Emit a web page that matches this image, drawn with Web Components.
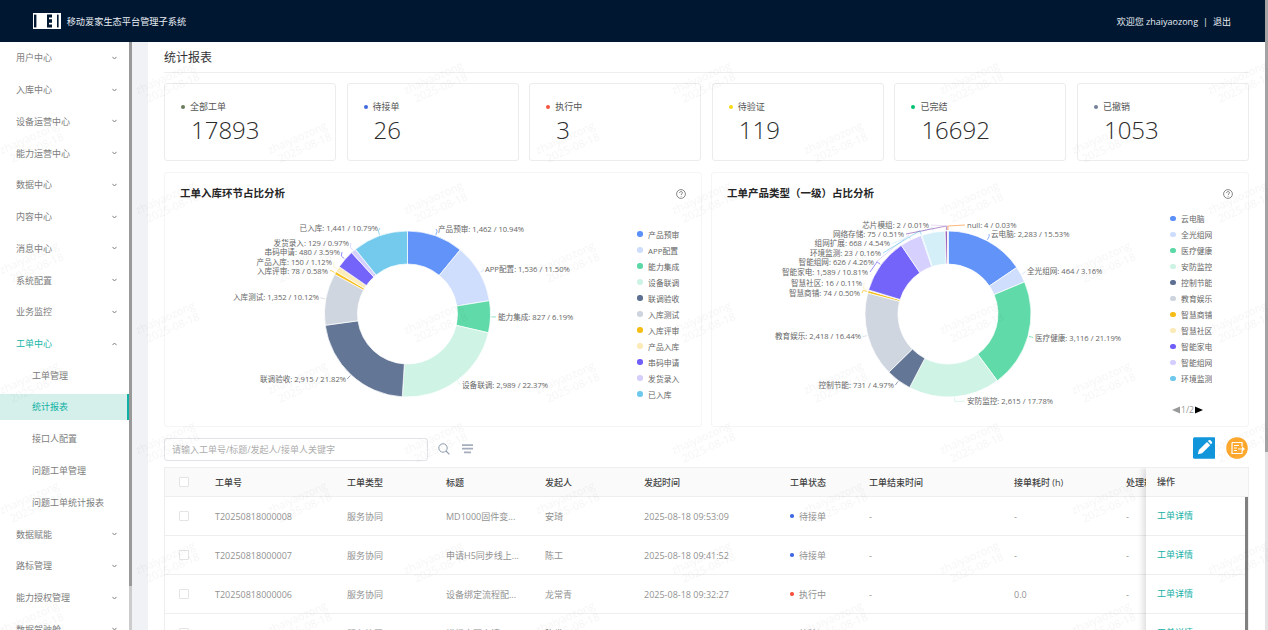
<!DOCTYPE html>
<html lang="zh">
<head>
<meta charset="utf-8">
<title>统计报表</title>
<style>
html,body{margin:0;height:630px;overflow:hidden;background:#fff;}
body{font-family:"Open Sans","Noto Sans CJK SC",sans-serif;font-size:9px;color:#666;}
</style>
</head>
<body>
<app-shell>
  <top-bar slot="top" title="移动爱家生态平台管理子系统" user="zhaiyaozong"></top-bar>
  <side-nav slot="side">
    <side-item label="用户中心"></side-item>
    <side-item label="入库中心"></side-item>
    <side-item label="设备运营中心"></side-item>
    <side-item label="能力运营中心"></side-item>
    <side-item label="数据中心"></side-item>
    <side-item label="内容中心"></side-item>
    <side-item label="消息中心"></side-item>
    <side-item label="系统配置"></side-item>
    <side-item label="业务监控"></side-item>
    <side-item label="工单中心" open></side-item>
    <side-item label="工单管理" sub></side-item>
    <side-item label="统计报表" sub active></side-item>
    <side-item label="接口人配置" sub></side-item>
    <side-item label="问题工单管理" sub></side-item>
    <side-item label="问题工单统计报表" sub></side-item>
    <side-item label="数据赋能"></side-item>
    <side-item label="路标管理"></side-item>
    <side-item label="能力授权管理"></side-item>
    <side-item label="数据驾驶舱"></side-item>
  </side-nav>
  <report-page slot="main">
    <stat-card label="全部工单" value="17893" dot="#6b7b5e"></stat-card>
    <stat-card label="待接单" value="26" dot="#4169e1"></stat-card>
    <stat-card label="执行中" value="3" dot="#f5533d"></stat-card>
    <stat-card label="待验证" value="119" dot="#fadb14"></stat-card>
    <stat-card label="已完结" value="16692" dot="#00c16e"></stat-card>
    <stat-card label="已撤销" value="1053" dot="#738099"></stat-card>
    <donut-card slot="charts" chart="stage" heading="工单入库环节占比分析"></donut-card>
    <donut-card slot="charts" chart="product" heading="工单产品类型（一级）占比分析"></donut-card>
    <order-toolbar slot="tools"></order-toolbar>
    <order-table slot="table"></order-table>
  </report-page>
  <water-mark slot="mark"></water-mark>
</app-shell>

<script>
const COLORS=["#5B8FF9","#CDDDFD","#5AD8A6","#CDF3E4","#5D7092","#CED4DE","#F6BD16","#FCEBB9","#6F5EF9","#D3CEFD","#6DC8EC","#D3EEF9","#945FB9","#DECFEA","#FF9845"];

// label: [name, value, text shown after the name, label x, label y, side]
const CHARTS={
  stage:{left:164,width:470,cx:407.5,cy:314,legendTop:17,legendWidth:60,items:[
    ["产品预审",1462,"1,462 / 10.94%",438,229,"r"],
    ["APP配置",1536,"1,536 / 11.50%",485,269,"r"],
    ["能力集成",827,"827 / 6.19%",498,317,"r"],
    ["设备联调",2989,"2,989 / 22.37%",462,385,"r"],
    ["联调验收",2915,"2,915 / 21.82%",346,379,"l"],
    ["入库测试",1352,"1,352 / 10.12%",319,297,"l"],
    ["入库评审",78,"78 / 0.58%",328,271,"l"],
    ["产品入库",150,"150 / 1.12%",332,262,"l"],
    ["串码申请",480,"480 / 3.59%",340,252,"l"],
    ["发货录入",129,"129 / 0.97%",349,243,"l"],
    ["已入库",1441,"1,441 / 10.79%",378,228,"l"]
  ]},
  product:{left:711,width:456,cx:948,cy:314,legendTop:1.7,legendWidth:31,legendCount:11,pager:true,items:[
    ["云电脑",2283,"2,283 / 15.53%",991,234,"r"],
    ["全光组网",464,"464 / 3.16%",1027,271,"r"],
    ["医疗健康",3116,"3,116 / 21.19%",1035,338,"r"],
    ["安防监控",2615,"2,615 / 17.78%",967,401,"r"],
    ["控制节能",731,"731 / 4.97%",894,385,"l"],
    ["教育娱乐",2418,"2,418 / 16.44%",861,336,"l"],
    ["智慧商铺",74,"74 / 0.50%",860,293,"l"],
    ["智慧社区",16,"16 / 0.11%",862,283,"l"],
    ["智能家电",1589,"1,589 / 10.81%",868,272,"l"],
    ["智能组网",626,"626 / 4.26%",874,262,"l"],
    ["环境监测",23,"23 / 0.16%",881,253,"l"],
    ["组网扩展",668,"668 / 4.54%",890,243.5,"l"],
    ["网络存储",75,"75 / 0.51%",904,234,"l"],
    ["芯片模组",2,"2 / 0.01%",929,225,"l"],
    ["null",4,"4 / 0.03%",967,225,"r"]
  ]}
};

const ORDERS=[
  ["T20250818000008","服务协同","MD1000固件变...","安琦","2025-08-18 09:53:09","待接单","#4169e1","-","-","-"],
  ["T20250818000007","服务协同","申请H5同步线上...","陈工","2025-08-18 09:41:52","待接单","#4169e1","-","-","-"],
  ["T20250818000006","服务协同","设备绑定流程配...","龙常青","2025-08-18 09:32:27","执行中","#f5533d","-","0.0","-"],
  ["T20250818000005","服务协同","模板变更申请...","陈发","2025-08-18 09:20:11","待验证","#fadb14","-","0.0","-"]
];

class AppShell extends HTMLElement{
  constructor(){
    super();
    this.attachShadow({mode:"open"}).innerHTML=`<style>
      :host{display:grid;grid-template-columns:132px 16px 1fr 3px;grid-template-rows:42px 588px;width:1268px;height:630px;position:relative;overflow:hidden;}
      .top{grid-column:1 / 4;position:relative;z-index:3;}
      .side{grid-row:2;}
      .gap{grid-row:2;background:#f0f2f5;}
      .main{grid-row:2;min-width:0;overflow:hidden;}
      .bar{grid-column:4;grid-row:1 / 3;background:linear-gradient(#a3a3a3 452px,#e4e4e4 452px);}
    </style>
    <div class="top"><slot name="top"></slot></div>
    <div class="side"><slot name="side"></slot></div>
    <div class="gap"></div>
    <div class="main"><slot name="main"></slot></div>
    <div class="bar"></div>
    <slot name="mark"></slot>`;
  }
}

class TopBar extends HTMLElement{
  connectedCallback(){
    this.attachShadow({mode:"open"}).innerHTML=`<style>
      :host{display:flex;align-items:center;height:42px;background:#001731;color:#e8edf3;font-size:9.2px;padding:0 33px;box-sizing:border-box;}
      svg{display:block;margin-right:5.7px;}
      .user{margin-left:auto;padding-right:1px;display:flex;gap:5px;font-size:9px;}
    </style>
    <svg width="28" height="16" viewBox="0 0 28 16">
      <rect width="28" height="16" fill="#fff"/>
      <rect x="1" y="1.6" width="2.4" height="12.8" fill="#001731"/>
      <path d="M14 1.6h5v3h-3v1.6h3v3.6h-3v1.6h3v3h-5z" fill="#001731"/>
      <rect x="24" y="1.6" width="1.6" height="12.8" fill="#001731"/>
    </svg>
    <span>${this.getAttribute("title")}</span>
    <div class="user"><span>欢迎您 ${this.getAttribute("user")}</span><span>|</span><span>退出</span></div>`;
    this.removeAttribute("title");
  }
}

class SideNav extends HTMLElement{
  constructor(){
    super();
    this.attachShadow({mode:"open"}).innerHTML=`<style>
      :host{display:flex;height:588px;width:132px;overflow:hidden;}
      .list{width:129px;background:#fff;flex:none;}
      .bar{width:3px;flex:none;background:linear-gradient(#999 544px,#ccc 544px);}
    </style>
    <div class="list"><slot></slot></div><div class="bar"></div>`;
  }
}

class SideItem extends HTMLElement{
  connectedCallback(){
    const sub=this.hasAttribute("sub"),open=this.hasAttribute("open");
    this.attachShadow({mode:"open"}).innerHTML=`<style>
      :host{display:flex;align-items:center;height:31.75px;box-sizing:border-box;padding-left:16px;color:#7d7d7d;font-size:9px;}
      :host([sub]){padding-left:32px;}
      :host([open]){color:#16b5a8;}
      :host([active]){height:26px;margin:2.6px 0 3.1px;background:#d5f0eb;color:#10b0a4;border-right:2px solid #10b0a4;}
      svg{margin-left:auto;margin-right:12px;}
    </style>
    <span>${this.getAttribute("label")}</span>
    ${sub?"":`<svg width="5" height="4" viewBox="0 0 5 4"><path d="${open?"M.4 3.2L2.5 1l2.1 2.2":"M.4 .8l2.1 2.2L4.6 .8"}" fill="none" stroke="#7f7f7f" stroke-width="1"/></svg>`}`;
  }
}

class ReportPage extends HTMLElement{
  constructor(){
    super();
    this.attachShadow({mode:"open"}).innerHTML=`<style>
      :host{display:block;height:588px;background:#fff;padding:0 16px;box-sizing:border-box;overflow:hidden;}
      h1{margin:0;height:31px;box-sizing:border-box;line-height:31px;font-size:12px;font-weight:400;color:#333;border-bottom:1px solid #eee;}
      .stats{display:grid;grid-template-columns:repeat(6,172px);justify-content:space-between;margin-top:10px;}
      .charts{display:grid;grid-template-columns:538px 538px;justify-content:space-between;margin-top:11px;}
      .tools{margin-top:11px;}
      .table{margin-top:6px;}
    </style>
    <h1>统计报表</h1>
    <div class="stats"><slot></slot></div>
    <div class="charts"><slot name="charts"></slot></div>
    <div class="tools"><slot name="tools"></slot></div>
    <div class="table"><slot name="table"></slot></div>`;
  }
}

class StatCard extends HTMLElement{
  connectedCallback(){
    this.attachShadow({mode:"open"}).innerHTML=`<style>
      :host{display:block;height:78px;box-sizing:border-box;border:1px solid #ececec;border-radius:3px;padding:16px 0 0 16px;}
      .label{display:flex;align-items:center;height:13px;font-size:9px;color:#555;}
      i{width:4px;height:4px;border-radius:50%;background:var(--dot);margin-right:5px;}
      .value{font-size:24px;font-weight:300;line-height:30px;color:#2b2b2b;margin:2px 0 0 10px;}
    </style>
    <div class="label" style="--dot:${this.getAttribute("dot")}"><i></i>${this.getAttribute("label")}</div>
    <div class="value">${this.getAttribute("value")}</div>`;
  }
}

class DonutCard extends HTMLElement{
  connectedCallback(){
    const cfg=CHARTS[this.getAttribute("chart")];
    const total=cfg.items.reduce((s,d)=>s+d[1],0);
    const R=83,r=50,x0=cfg.left+1,y0=172+37,w=cfg.width,h=217;
    const pt=(rad,a)=>[cfg.cx+rad*Math.sin(a),cfg.cy-rad*Math.cos(a)];
    let a=0,arcs="",labels="";
    cfg.items.forEach((d,i)=>{
      const b=a+d[1]/total*Math.PI*2,c=COLORS[i%COLORS.length],big=b-a>Math.PI?1:0;
      const [p,q,s,t]=[pt(R,a),pt(R,b),pt(r,b),pt(r,a)];
      arcs+=`<path d="M${p}A${R} ${R} 0 ${big} 1 ${q}L${s}A${r} ${r} 0 ${big} 0 ${t}Z" fill="${c}" fill-opacity=".96" stroke="#fff" stroke-width=".7"/>`;
      const m=(a+b)/2,right=d[5]==="r",[k,l]=[pt(R+1,m),pt(R+5,m)];
      const ex=d[3]+(right?-2:2);
      labels+=`<polyline points="${k} ${l} ${ex},${d[4]}" fill="none" stroke="${c}" stroke-width=".7"/>`;
      labels+=`<text x="${d[3]}" y="${d[4]}" dy=".35em" text-anchor="${right?"start":"end"}">${d[0]}: ${d[2]}</text>`;
      a=b;
    });
    const shown=cfg.items.slice(0,cfg.legendCount||cfg.items.length);
    this.attachShadow({mode:"open"}).innerHTML=`<style>
      :host{display:block;height:255px;box-sizing:border-box;border:1px solid #f5f5f5;border-radius:3px;}
      header{display:flex;align-items:flex-start;height:36px;box-sizing:border-box;padding:14px 15px 0;font-size:10.5px;line-height:13px;font-weight:600;color:#262626;}
      header svg{margin-left:auto;margin-top:2px;}
      .body{display:flex;height:217px;}
      .chart{flex:none;display:block;}
      .chart text{font-size:7.6px;fill:#666;}
      ul{list-style:none;margin:0;padding:${cfg.legendTop}px 0 0 2px;font-size:7.8px;color:#666;}
      li{display:flex;align-items:center;height:16px;}
      li i{flex:none;width:5.5px;height:5.5px;border-radius:50%;margin-right:5.6px;}
      li span{display:block;width:${cfg.legendWidth}px;white-space:nowrap;overflow:hidden;}
      .pager{gap:1px;margin:15px 0 0 2px;color:#999;font-size:8.6px;}
    </style>
    <header><span>${this.getAttribute("heading")}</span>
      <svg width="10" height="10" viewBox="0 0 10 10"><circle cx="5" cy="5" r="4.4" fill="none" stroke="#555" stroke-width=".7"/><path d="M3.6 4c0-1.9 2.9-1.9 2.9-.2 0 1-1.4 1-1.4 2.2" fill="none" stroke="#555" stroke-width=".7"/><circle cx="5.1" cy="7.3" r=".45" fill="#555"/></svg>
    </header>
    <div class="body">
      <svg class="chart" width="${w}" height="${h}" viewBox="${x0} ${y0} ${w} ${h}">${arcs}${labels}</svg>
      <ul>${shown.map((d,i)=>`<li><i style="background:${COLORS[i]}"></i><span>${d[0]}</span></li>`).join("")}
      ${cfg.pager?`<li class="pager"><svg width="8" height="8" viewBox="0 0 8 8"><path d="M0 4L8 .5v7z" fill="#999"/></svg>1/2<svg width="8" height="8" viewBox="0 0 8 8"><path d="M8 4L0 .5v7z" fill="#000"/></svg></li>`:""}</ul>
    </div>`;
  }
}

class OrderToolbar extends HTMLElement{
  constructor(){
    super();
    this.attachShadow({mode:"open"}).innerHTML=`<style>
      :host{display:flex;align-items:flex-start;height:23px;}
      input{width:264px;height:23px;box-sizing:border-box;border:1px solid #e1e3e8;border-radius:3px;padding:0 7px;font:inherit;font-size:9px;outline:none;}
      input::placeholder{color:#adadad;}
      .ico{margin:5px 0 0 10px;}
      .ico + .ico{margin-left:12px;}
      .btns{margin:-1px 1px 0 auto;display:flex;gap:11px;}
      .btns svg{display:block;}
    </style>
    <input placeholder="请输入工单号/标题/发起人/接单人关键字">
    <svg class="ico" width="12" height="12" viewBox="0 0 12 12"><circle cx="5" cy="5" r="4.2" fill="none" stroke="#8f9db0" stroke-width="1"/><path d="M8 8l3.4 3.4" stroke="#8f9db0" stroke-width="1.1"/></svg>
    <svg class="ico" width="11" height="12" viewBox="0 0 11 12"><path d="M0 1.2h11v1.8H0zM0 4.8h11v1.8H0zM2 8.4h7v1.8H2z" fill="#a3adbb"/></svg>
    <div class="btns">
      <svg width="22.5" height="22" viewBox="0 0 23 22"><rect width="23" height="22" rx="1.6" fill="#1296db"/><path d="M5 17.5l1-4.4 8.3-8.3 3.3 3.3-8.3 8.3z" fill="#fff"/><path d="M15.2 3.9l1-.9c.5-.4 1.1-.4 1.5 0l1.6 1.6c.4.4.4 1 0 1.5l-1 1z" fill="#fff"/></svg>
      <svg width="22" height="22" viewBox="0 0 22 22"><circle cx="11" cy="11" r="10.8" fill="#ffa92e"/><path d="M6 5.5h10v4M16 13.5v3H6v-11" fill="none" stroke="#fff" stroke-width="1.2"/><path d="M8 8.5h5M8 11h3M8 13.5h3" stroke="#fff" stroke-width="1"/><path d="M12 11.5h4V9.6l3 2.4-3 2.4v-1.9h-4z" fill="#fff"/></svg>
    </div>`;
  }
}

class OrderTable extends HTMLElement{
  connectedCallback(){
    const heads=["工单号","工单类型","标题","发起人","发起时间","工单状态","工单结束时间","接单耗时 (h)","处理耗时 (h)"];
    const cell=t=>`<div>${t}</div>`;
    const box=`<div><b class="box"></b></div>`;
    const rows=ORDERS.map(o=>`<div class="row">${box}${cell(o[0])}${cell(o[1])}${cell(o[2])}${cell(o[3])}${cell(o[4])}<div class="st"><i style="background:${o[6]}"></i>${o[5]}</div>${cell(o[7])}${cell(o[8])}${cell(o[9])}</div>`).join("");
    this.attachShadow({mode:"open"}).innerHTML=`<style>
      :host{display:flex;height:200px;box-sizing:border-box;border:1px solid #eee;border-bottom:0;overflow:hidden;font-size:9px;color:#929292;}
      .main{flex:1;min-width:0;overflow:hidden;}
      .row,.head{display:grid;grid-template-columns:50px 132px 99px 99px 99px 146px 79px 145px 112px 90px;align-items:center;height:39px;box-sizing:border-box;border-bottom:1px solid #eee;white-space:nowrap;}
      .head{height:29px;background:#fafafa;color:#444;font-weight:500;}
      .box{display:block;width:10px;height:10px;box-sizing:border-box;border:1px solid #e4e4e4;border-radius:1px;margin-left:14px;background:#fff;}
      .st{display:flex;align-items:center;}
      .st i{width:3.5px;height:3.5px;border-radius:50%;margin-right:5.5px;}
      .fix{flex:none;width:102px;position:relative;background:#fff;box-shadow:-3px 0 6px rgba(0,0,0,.13);}
      .fix .c{display:flex;align-items:center;height:39px;box-sizing:border-box;padding:0 0 1px 11px;border-bottom:1px solid #eee;color:#16b0a6;}
      .fix .c.h{height:29px;background:#fafafa;color:#444;font-weight:500;}
      .fix .sb{position:absolute;top:29px;right:0;bottom:0;width:3px;background:#808080;}
    </style>
    <div class="main"><div class="head">${box}${heads.map(cell).join("")}</div>${rows}</div>
    <div class="fix"><div class="c h">操作</div>${ORDERS.map(()=>`<div class="c">工单详情</div>`).join("")}<div class="sb"></div></div>`;
  }
}

class WaterMark extends HTMLElement{
  constructor(){
    super();
    const mark=(x,y)=>`<g transform="translate(${x} ${y}) rotate(-24)"><text text-anchor="middle" y="-3">zhaiyaozong</text><text text-anchor="middle" x="3" y="9">2025-08-18</text></g>`;
    this.attachShadow({mode:"open"}).innerHTML=`<style>
      :host{position:absolute;inset:0;z-index:2;pointer-events:none;display:block;}
      svg{display:block;}
      text{font-size:11px;fill:rgba(0,0,0,.04);}
    </style>
    <svg width="1268" height="630"><defs><pattern id="wm" patternUnits="userSpaceOnUse" x="-20" y="50" width="268" height="120">${mark(188,34)}${mark(52,94)}</pattern></defs><rect width="1268" height="630" fill="url(#wm)"/></svg>`;
  }
}

customElements.define("app-shell",AppShell);
customElements.define("top-bar",TopBar);
customElements.define("side-nav",SideNav);
customElements.define("side-item",SideItem);
customElements.define("report-page",ReportPage);
customElements.define("stat-card",StatCard);
customElements.define("donut-card",DonutCard);
customElements.define("order-toolbar",OrderToolbar);
customElements.define("order-table",OrderTable);
customElements.define("water-mark",WaterMark);
</script>
</body>
</html>
